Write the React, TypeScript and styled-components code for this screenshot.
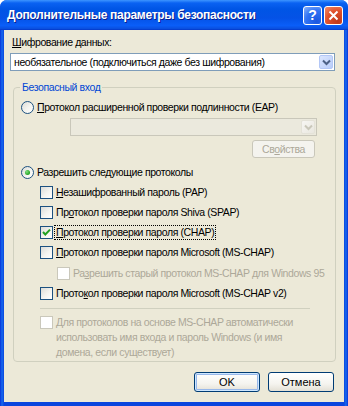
import React from 'react';
import styled, { createGlobalStyle } from 'styled-components';

const GlobalStyle = createGlobalStyle`
  html, body {
    margin: 0;
    padding: 0;
    background: #ffffff;
  }
  body {
    font-family: "Liberation Sans", Tahoma, sans-serif;
    font-size: 10.5px;
    letter-spacing: -0.4px;
    color: #000;
  }
  * {
    box-sizing: border-box;
  }
`;

const Window = styled.div`
  width: 348px;
  height: 406px;
  display: flex;
  flex-direction: column;
  background: linear-gradient(to right, #0831d9 0px, #166aee 2px, #0a45de 4px, #0a45de 344px, #166aee 346px, #0831d9 348px);
  border-radius: 7px 7px 0 0;
  overflow: hidden;
`;

const TitleBar = styled.div`
  height: 30px;
  flex: none;
  display: flex;
  align-items: center;
  padding: 0 5px 0 7px;
  background: linear-gradient(
    to bottom,
    #3d95ff 0%,
    #0a62f2 10%,
    #0055e5 30%,
    #0452e6 60%,
    #0a5ef8 85%,
    #0a50e0 95%,
    #0336c8 100%
  );
`;

const Title = styled.div`
  flex: 1;
  color: #fff;
  font-weight: bold;
  font-size: 12px;
  letter-spacing: -0.3px;
  text-shadow: 1px 1px 0 #0a1e8c;
  white-space: nowrap;
`;

const CaptionButton = styled.div<{ $tone: 'help' | 'close' }>`
  width: 19px;
  height: 19px;
  margin-left: 2px;
  border: 1px solid #fff;
  border-radius: 3px;
  display: flex;
  align-items: center;
  justify-content: center;
  color: #fff;
  font-weight: bold;
  font-size: 14px;
  letter-spacing: 0;
  background: ${p =>
    p.$tone === 'close'
      ? 'radial-gradient(circle at 75% 85%, #c0391a 0%, #e0502a 55%, #f28d6c 100%)'
      : 'radial-gradient(circle at 75% 85%, #1a56e0 0%, #2f72f4 55%, #8ab3fb 100%)'};
`;

const Client = styled.div`
  flex: 1;
  margin: 0 4px 4px;
  background: #ece9d8;
  display: flex;
  flex-direction: column;
  padding: 6px 9px 0 6px;
`;

const FieldLabel = styled.div`
  height: 13px;
  line-height: 13px;
  margin: 0 0 4px 2px;
`;

const Key = styled.span`
  text-decoration: underline;
`;

const Combo = styled.div<{ $disabled?: boolean }>`
  height: 18px;
  display: flex;
  align-items: center;
  padding-left: 3px;
  border: 1px solid ${p => (p.$disabled ? '#c9c7ba' : '#7f9db9')};
  background: ${p => (p.$disabled ? '#ebe9dd' : '#ffffff')};
`;

const ComboText = styled.div`
  flex: 1;
  white-space: nowrap;
  overflow: hidden;
`;

const ComboArrow = styled.div<{ $disabled?: boolean }>`
  width: 14px;
  height: 14px;
  margin-right: 1px;
  border-radius: 2px;
  display: flex;
  align-items: center;
  justify-content: center;
  border: 1px solid ${p => (p.$disabled ? '#e4e2d8' : '#b3c7f6')};
  background: ${p =>
    p.$disabled
      ? 'linear-gradient(135deg, #f7f6f3, #e9e7df)'
      : 'linear-gradient(135deg, #dbe6fe, #b9cdf9)'};
`;

const DisabledCombo = styled(Combo)`
  margin: 1px 0 0 56px;
  width: 247px;
`;

const Group = styled.fieldset`
  margin: 10px -1px 0 3px;
  padding: 0;
  min-width: 0;
  border: 1px solid #d0d0bf;
  border-radius: 4px;
`;

const Legend = styled.legend`
  color: #0046d5;
  padding: 0 2px;
  margin-left: 6px;
  line-height: 13px;
  height: 13px;
`;

const GroupBody = styled.div`
  display: flex;
  flex-direction: column;
  padding-bottom: 1px;
`;

const OptionRow = styled.div<{ $indent: number; $gap?: number; $disabled?: boolean }>`
  height: 20px;
  display: flex;
  align-items: center;
  margin-left: ${p => p.$indent}px;
  margin-top: ${p => p.$gap ?? 0}px;
  color: ${p => (p.$disabled ? '#aca899' : '#000')};
  white-space: nowrap;
`;

const OptionText = styled.span<{ $focused?: boolean }>`
  margin-left: 3px;
  line-height: 13px;
  outline: ${p => (p.$focused ? '1px dotted #000' : 'none')};
  outline-offset: 0;
  padding: 0 1px;
  position: relative;
  left: -1px;
`;

const RadioMark = styled.span<{ $on?: boolean }>`
  width: 13px;
  height: 13px;
  flex: none;
  border-radius: 50%;
  border: 1px solid #1c5180;
  background: linear-gradient(135deg, #dcdcd7 0%, #f4f4f0 55%, #ffffff 100%);
  display: flex;
  align-items: center;
  justify-content: center;
  &::after {
    content: '';
    display: ${p => (p.$on ? 'block' : 'none')};
    width: 5px;
    height: 5px;
    border-radius: 50%;
    background: radial-gradient(circle at 35% 35%, #7fe07f 0%, #21a121 70%);
  }
`;

const CheckMark = styled.span<{ $disabled?: boolean }>`
  width: 13px;
  height: 13px;
  flex: none;
  border: 1px solid ${p => (p.$disabled ? '#cac8bb' : '#1c5180')};
  background: ${p =>
    p.$disabled ? '#ffffff' : 'linear-gradient(135deg, #dcdcd7 0%, #f4f4f0 55%, #ffffff 100%)'};
  display: flex;
  align-items: center;
  justify-content: center;
`;

const PropsButton = styled.div`
  align-self: flex-end;
  margin: 4px 20px 0 0;
  width: 63px;
  height: 18px;
  border: 1px solid #c9c7ba;
  border-radius: 3px;
  background: #f4f3ee;
  color: #aca899;
  display: flex;
  align-items: center;
  justify-content: center;
`;

const Separator = styled.div`
  margin: 5px 0 0 26px;
  width: 270px;
  height: 1px;
  background: #d0d0bf;
`;

const NoteBlock = styled.div`
  display: flex;
  align-items: flex-start;
  margin: 7px 0 0 26px;
  color: #aca899;
`;

const NoteText = styled.div`
  margin-left: 3px;
  line-height: 15px;
  margin-top: -1px;
`;

const ButtonRow = styled.div`
  display: flex;
  justify-content: flex-end;
  gap: 8px;
  margin: 10px 1px 0 0;
`;

const PushButton = styled.div<{ $default?: boolean }>`
  width: 66px;
  height: 20px;
  border: 1px solid #003c74;
  border-radius: 3px;
  background: linear-gradient(to bottom, #ffffff 0%, #f5f4ef 60%, #e3e0d5 100%);
  display: flex;
  align-items: center;
  justify-content: center;
  font-size: 11px;
  letter-spacing: 0;
  box-shadow: ${p => (p.$default ? 'inset 0 0 0 1px #cee7ff, inset 0 0 0 2px #98b8ea' : 'none')};
`;

const Chevron = ({ color }: { color: string }) => (
  <svg width="9" height="7" viewBox="0 0 9 7">
    <path d="M1 1.5 L4.5 5 L8 1.5" fill="none" stroke={color} strokeWidth="2" />
  </svg>
);

const Tick = () => (
  <svg width="11" height="11" viewBox="0 0 11 11">
    <path d="M2 5 L4.3 7.5 L9 2.6" fill="none" stroke="#21a121" strokeWidth="2" />
  </svg>
);

const Check = ({ checked, disabled }: { checked?: boolean; disabled?: boolean }) => (
  <CheckMark $disabled={disabled}>{checked && <Tick />}</CheckMark>
);

export default function App() {
  return (
    <>
      <GlobalStyle />
      <Window>
        <TitleBar>
          <Title>Дополнительные параметры безопасности</Title>
          <CaptionButton $tone="help">?</CaptionButton>
          <CaptionButton $tone="close">
            <svg width="11" height="11" viewBox="0 0 11 11">
              <path d="M1.5 1.5 L9.5 9.5 M9.5 1.5 L1.5 9.5" stroke="#fff" strokeWidth="2" />
            </svg>
          </CaptionButton>
        </TitleBar>
        <Client>
          <FieldLabel>
            <Key>Ш</Key>ифрование данных:
          </FieldLabel>
          <Combo>
            <ComboText>необязательное (подключиться даже без шифрования)</ComboText>
            <ComboArrow>
              <Chevron color="#4d6185" />
            </ComboArrow>
          </Combo>

          <Group>
            <Legend>Безопасный вход</Legend>
            <GroupBody>
              <OptionRow $indent={7} $gap={3}>
                <RadioMark />
                <OptionText>
                  <Key>П</Key>ротокол расширенной проверки подлинности (EAP)
                </OptionText>
              </OptionRow>
              <DisabledCombo $disabled>
                <ComboText />
                <ComboArrow $disabled>
                  <Chevron color="#c9c7ba" />
                </ComboArrow>
              </DisabledCombo>
              <PropsButton>
                Св<Key>о</Key>йства
              </PropsButton>

              <OptionRow $indent={7} $gap={4}>
                <RadioMark $on />
                <OptionText>
                  Разрешить сле<Key>д</Key>ующие протоколы
                </OptionText>
              </OptionRow>
              <OptionRow $indent={26}>
                <Check />
                <OptionText>
                  <Key>Н</Key>езашифрованный пароль (PAP)
                </OptionText>
              </OptionRow>
              <OptionRow $indent={26}>
                <Check />
                <OptionText>
                  Пр<Key>о</Key>токол проверки пароля Shiva (SPAP)
                </OptionText>
              </OptionRow>
              <OptionRow $indent={26}>
                <Check checked />
                <OptionText $focused>
                  <Key>П</Key>ротокол проверки пароля (CHAP)
                </OptionText>
              </OptionRow>
              <OptionRow $indent={26}>
                <Check />
                <OptionText>
                  <Key>П</Key>ротокол проверки пароля Microsoft (MS-CHAP)
                </OptionText>
              </OptionRow>
              <OptionRow $indent={43} $gap={1} $disabled>
                <Check disabled />
                <OptionText>
                  Ра<Key>з</Key>решить старый протокол MS-CHAP для Windows 95
                </OptionText>
              </OptionRow>
              <OptionRow $indent={26}>
                <Check />
                <OptionText>
                  Прото<Key>к</Key>ол проверки пароля Microsoft (MS-CHAP v2)
                </OptionText>
              </OptionRow>

              <Separator />

              <NoteBlock>
                <Check disabled />
                <NoteText>
                  Для протоколов на основе MS-CHAP автоматически
                  <br />
                  использовать имя входа и пароль Windows (и имя
                  <br />
                  домена, если существует)
                </NoteText>
              </NoteBlock>
            </GroupBody>
          </Group>

          <ButtonRow>
            <PushButton $default>OK</PushButton>
            <PushButton>Отмена</PushButton>
          </ButtonRow>
        </Client>
      </Window>
    </>
  );
}
